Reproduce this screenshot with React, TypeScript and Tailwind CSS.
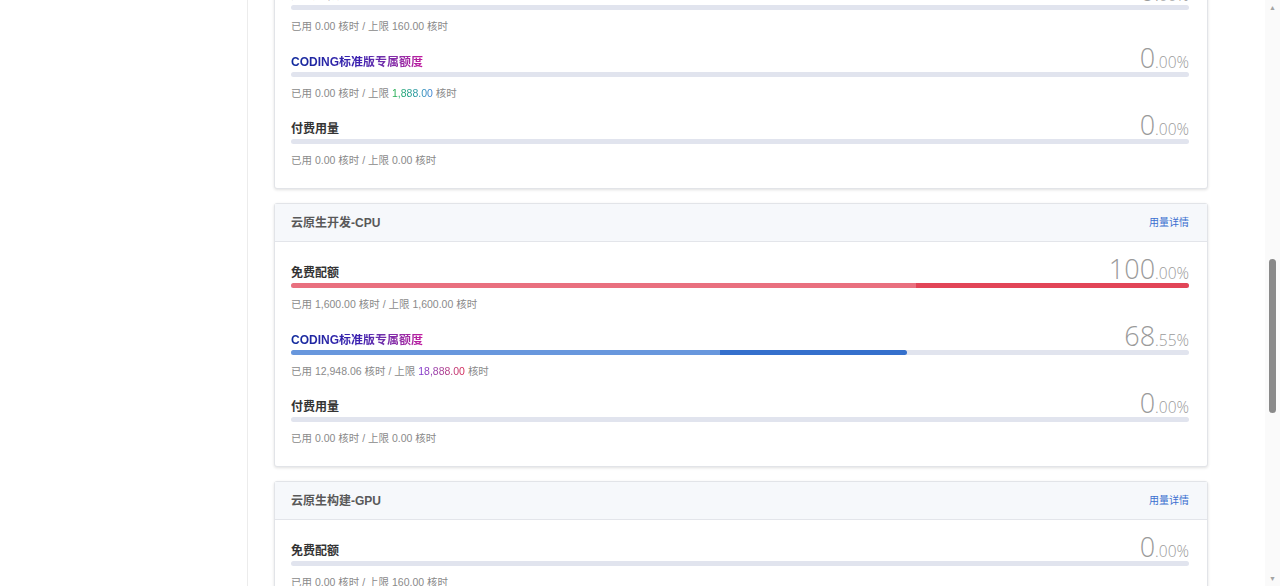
import React from 'react';

type Seg = { w: number; color: string };

type Row = {
  title: string;
  special?: boolean;
  whole: string;
  frac: string;
  used: string;
  limit: string;
  limitStyle?: 'green' | 'purple';
  segs?: Seg[];
};

type Card = { name: string; rows: Row[] };

const cards: Card[] = [
  {
    name: '云原生构建-CPU',
    rows: [
      { title: '免费配额', whole: '0', frac: '.00%', used: '0.00', limit: '160.00' },
      { title: 'CODING标准版专属额度', special: true, whole: '0', frac: '.00%', used: '0.00', limit: '1,888.00', limitStyle: 'green' },
      { title: '付费用量', whole: '0', frac: '.00%', used: '0.00', limit: '0.00' },
    ],
  },
  {
    name: '云原生开发-CPU',
    rows: [
      {
        title: '免费配额',
        whole: '100',
        frac: '.00%',
        used: '1,600.00',
        limit: '1,600.00',
        segs: [
          { w: 69.6, color: 'bg-[#e9707f]' },
          { w: 30.4, color: 'bg-[#e24557]' },
        ],
      },
      {
        title: 'CODING标准版专属额度',
        special: true,
        whole: '68',
        frac: '.55%',
        used: '12,948.06',
        limit: '18,888.00',
        limitStyle: 'purple',
        segs: [
          { w: 47.8, color: 'bg-[#6897dd]' },
          { w: 20.75, color: 'bg-[#3570cc]' },
        ],
      },
      { title: '付费用量', whole: '0', frac: '.00%', used: '0.00', limit: '0.00' },
    ],
  },
  {
    name: '云原生构建-GPU',
    rows: [
      { title: '免费配额', whole: '0', frac: '.00%', used: '0.00', limit: '160.00' },
      { title: 'CODING标准版专属额度', special: true, whole: '0', frac: '.00%', used: '0.00', limit: '1,888.00', limitStyle: 'green' },
      { title: '付费用量', whole: '0', frac: '.00%', used: '0.00', limit: '0.00' },
    ],
  },
];

function QuotaRow({ row }: { row: Row }) {
  return (
    <div>
      <div className="flex items-end justify-between h-[26px]">
        {row.special ? (
          <span className="text-[12px] leading-[13px] font-bold bg-linear-to-r from-[#0d2a9c] via-[#3a1fb0] to-[#c0179f] bg-clip-text text-transparent">
            {row.title}
          </span>
        ) : (
          <span className="text-[12px] leading-[13px] font-bold text-[#333]">{row.title}</span>
        )}
        <span className="translate-y-[2px] font-['Open_Sans',sans-serif] font-light text-[#9a9a9a] leading-none">
          <span className="text-[27px]">{row.whole}</span>
          <span className="text-[15.5px]">{row.frac}</span>
        </span>
      </div>
      <div className="mt-[3px] h-[5px] rounded-full bg-[#e1e4ee]">
        {row.segs && (
          <div className="flex h-full overflow-hidden rounded-full" style={{ width: `${row.segs.reduce((a, s) => a + s.w, 0)}%` }}>
            {row.segs.map((s, i) => (
              <div key={i} className={`h-full ${s.color}`} style={{ flexGrow: s.w, flexBasis: 0 }} />
            ))}
          </div>
        )}
      </div>
      <div className="mt-[8px] text-[10.5px] leading-[16px] text-[#8a8a8a]">
        已用 {row.used} 核时 / 上限{' '}
        {row.limitStyle === 'green' ? (
          <span className="bg-linear-to-r from-[#1fae3c] to-[#3a7fd6] bg-clip-text text-transparent">{row.limit}</span>
        ) : row.limitStyle === 'purple' ? (
          <span className="bg-linear-to-r from-[#7a2fd6] to-[#d41d4e] bg-clip-text text-transparent">{row.limit}</span>
        ) : (
          row.limit
        )}{' '}
        核时
      </div>
    </div>
  );
}

function UsageCard({ card }: { card: Card }) {
  return (
    <div className="w-[934px] rounded-[3px] border border-[#e2e4e8] bg-white shadow-[0_1px_3px_rgba(0,0,0,0.12)]">
      <div className="flex h-[38px] items-center justify-between border-b border-[#e3e5ea] bg-[#f6f8fb] pl-4 pr-[18px]">
        <span className="text-[12px] font-bold text-[#595959]">{card.name}</span>
        <span className="text-[10px] text-[#3a6fd0]">用量详情</span>
      </div>
      <div className="flex flex-col gap-[9px] pl-4 pr-[18px] pt-[12px] pb-[20px]">
        {card.rows.map((r, i) => (
          <QuotaRow key={i} row={r} />
        ))}
      </div>
    </div>
  );
}

export default function App() {
  return (
    <div className="flex h-[586px] overflow-hidden bg-white font-['Liberation_Sans','Noto_Sans_CJK_SC',sans-serif]">
      <aside className="w-[248px] shrink-0 border-r border-[#ececec] bg-white" />
      <main className="flex-1 pl-[26px]">
        <div className="-mt-[75px] flex flex-col gap-[14px]">
          {cards.map((c, i) => (
            <UsageCard key={i} card={c} />
          ))}
        </div>
      </main>
      <div className="flex w-[15px] shrink-0 flex-col items-center bg-[#fafafa]">
        <span className="mt-[4px] text-[7px] leading-none text-[#a3a3a3]">▲</span>
        <div className="mt-[248px] h-[154px] w-[7px] rounded-full bg-[#8a8a8a]" />
        <div className="flex-1" />
        <span className="mb-[4px] text-[7px] leading-none text-[#a3a3a3]">▼</span>
      </div>
    </div>
  );
}
